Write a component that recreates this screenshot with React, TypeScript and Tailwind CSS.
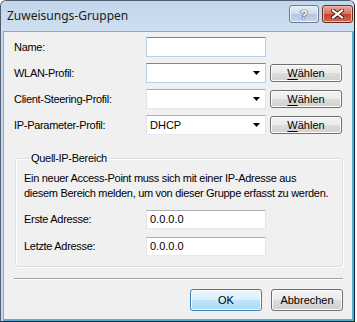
import type { ReactNode } from 'react';

const font = { fontFamily: '"Liberation Sans", Arial, sans-serif' };

function TextBox({ value = '', blue = false, h = 'h-[20px]' }: { value?: string; blue?: boolean; h?: string }) {
  return (
    <div
      className={`w-[120px] ${h} bg-white border flex items-center px-[3px] text-[11px] text-black ${
        blue
          ? 'border-[#b7d0e8] border-t-[#5b8fc4]'
          : 'border-[#e2e3ea] border-t-[#abadb3] border-b-[#e3e9ef]'
      }`}
    >
      {value}
    </div>
  );
}

function Combo({ value = '', blue = false }: { value?: string; blue?: boolean }) {
  return (
    <div
      className={`w-[120px] h-[20px] bg-white border flex items-center justify-between pl-[3px] pr-[5px] text-[11px] text-black ${
        blue
          ? 'border-[#b7d0e8] border-t-[#5b8fc4]'
          : 'border-[#e2e3ea] border-t-[#abadb3] border-b-[#e3e9ef]'
      }`}
    >
      <span>{value}</span>
      <svg width="7" height="4" viewBox="0 0 7 4">
        <polygon points="0,0 7,0 3.5,4" fill="#000" />
      </svg>
    </div>
  );
}

function Btn({ children, w = 'w-[72px]', h = 'h-[18px]', primary = false }: { children: ReactNode; w?: string; h?: string; primary?: boolean }) {
  return (
    <div
      className={`${w} ${h} rounded-[3px] border flex items-center justify-center text-[11px] text-black shadow-[inset_0_0_0_1px_#fcfcfc] ${
        primary
          ? 'border-[#3c7fb1] bg-[linear-gradient(#eaf6fd_0%,#d9f0fc_50%,#bee6fd_50%,#a7d9f5_100%)]'
          : 'border-[#707070] bg-[linear-gradient(#f2f2f2_0%,#ebebeb_50%,#dddddd_50%,#cfcfcf_100%)]'
      }`}
    >
      {children}
    </div>
  );
}

function Wählen() {
  return (
    <Btn>
      <span>
        <span className="underline underline-offset-[2px]">W</span>ählen
      </span>
    </Btn>
  );
}

export default function App() {
  const rows = [
    { label: 'Name:', field: <TextBox blue />, button: false },
    { label: 'WLAN-Profil:', field: <Combo blue />, button: true },
    { label: 'Client-Steering-Profil:', field: <Combo />, button: true },
    { label: 'IP-Parameter-Profil:', field: <Combo value="DHCP" />, button: true },
  ];

  return (
    <div className="w-[357px] h-[322px] bg-white" style={font}>
      <div className="w-[355px] h-[322px] flex flex-col rounded-t-[6px] border border-[#4e5d70] border-r-[#1d1d1d] border-b-[#1d1d1d] bg-[#c6d9ee] overflow-hidden">
        {/* title bar */}
        <div className="h-[30px] shrink-0 flex items-start justify-between pl-[6px] pr-[1px] bg-[linear-gradient(#c2d6ec,#cfdff0)]">
          <span className="mt-[6px] text-[12px] text-[#1a1a1a]" style={{ fontFamily: '"Noto Sans", "Open Sans", sans-serif' }}>
            Zuweisungs-Gruppen
          </span>
          <div className="flex gap-[3px] mt-[4px]">
            <div className="w-[30px] h-[18px] rounded-[3px] border border-[#6a7b91] bg-[linear-gradient(#e6eef7_0%,#cad9ea_50%,#b1c6de_50%,#c3d5ea_100%)] shadow-[inset_0_0_0_1px_#eef4fa] flex items-center justify-center">
              <span className="text-[13px] font-bold text-white leading-none [text-shadow:0_0_1px_#2c3e55,0_0_1px_#2c3e55,0_0_1px_#2c3e55]">?</span>
            </div>
            <div className="w-[31px] h-[18px] rounded-[3px] border border-[#6d2a22] bg-[linear-gradient(#e9a99c_0%,#d7705f_50%,#c2412d_50%,#d46a55_100%)] shadow-[inset_0_0_0_1px_#eebcb2] flex items-center justify-center">
              <svg width="13" height="10" viewBox="0 0 13 10">
                <path d="M2 1.5 L11 8.5 M11 1.5 L2 8.5" stroke="#4a1a14" strokeWidth="4" strokeLinecap="square" />
                <path d="M2 1.5 L11 8.5 M11 1.5 L2 8.5" stroke="#ffffff" strokeWidth="2.2" strokeLinecap="square" />
              </svg>
            </div>
          </div>
        </div>

        {/* client */}
        <div className="flex-1 flex ml-[2px]">
          <div className="flex-1 flex flex-col bg-[#f0f0f0] border-l border-t border-[#8ea6c2] border-r-2 border-b-2 border-r-[#46b2e4] border-b-[#46b2e4] pl-[10px] pr-[9px] pt-[5px] text-[11px] text-black">
            <div className="flex flex-col gap-[6px]">
              {rows.map((r) => (
                <div key={r.label} className="flex items-center h-[20px]">
                  <span className="w-[132px] tracking-[-0.3px]">{r.label}</span>
                  {r.field}
                  {r.button && (
                    <div className="ml-[4px]">
                      <Wählen />
                    </div>
                  )}
                </div>
              ))}
            </div>

            <fieldset className="mt-[16px] ml-[1px] w-[328px] rounded-[3px] border border-[#d5dfe5] shadow-[inset_1px_1px_0_#fff,1px_1px_0_#fff] pl-[8px] pb-[10px]">
              <legend className="ml-[5px] px-[2px] leading-[14px] tracking-[-0.3px]">Quell-IP-Bereich</legend>
              <p className="mt-[6px] leading-[15px] tracking-[-0.3px]">
                Ein neuer Access-Point muss sich mit einer IP-Adresse aus
                <br />
                diesem Bereich melden, um von dieser Gruppe erfasst zu werden.
              </p>
              <div className="mt-[9px] flex flex-col gap-[8px]">
                <div className="flex items-center">
                  <span className="w-[122px] tracking-[-0.3px]">Erste Adresse:</span>
                  <TextBox value="0.0.0.0" h="h-[19px]" />
                </div>
                <div className="flex items-center">
                  <span className="w-[122px] tracking-[-0.3px]">Letzte Adresse:</span>
                  <TextBox value="0.0.0.0" h="h-[19px]" />
                </div>
              </div>
            </fieldset>

            <div className="mt-[11px] h-[2px] border-t border-[#a0a0a0] border-b border-b-white" />

            <div className="mt-[9px] flex justify-end gap-[9px]">
              <Btn primary h="h-[22px]">OK</Btn>
              <Btn h="h-[22px]">Abbrechen</Btn>
            </div>
          </div>
        </div>
      </div>
    </div>
  );
}
